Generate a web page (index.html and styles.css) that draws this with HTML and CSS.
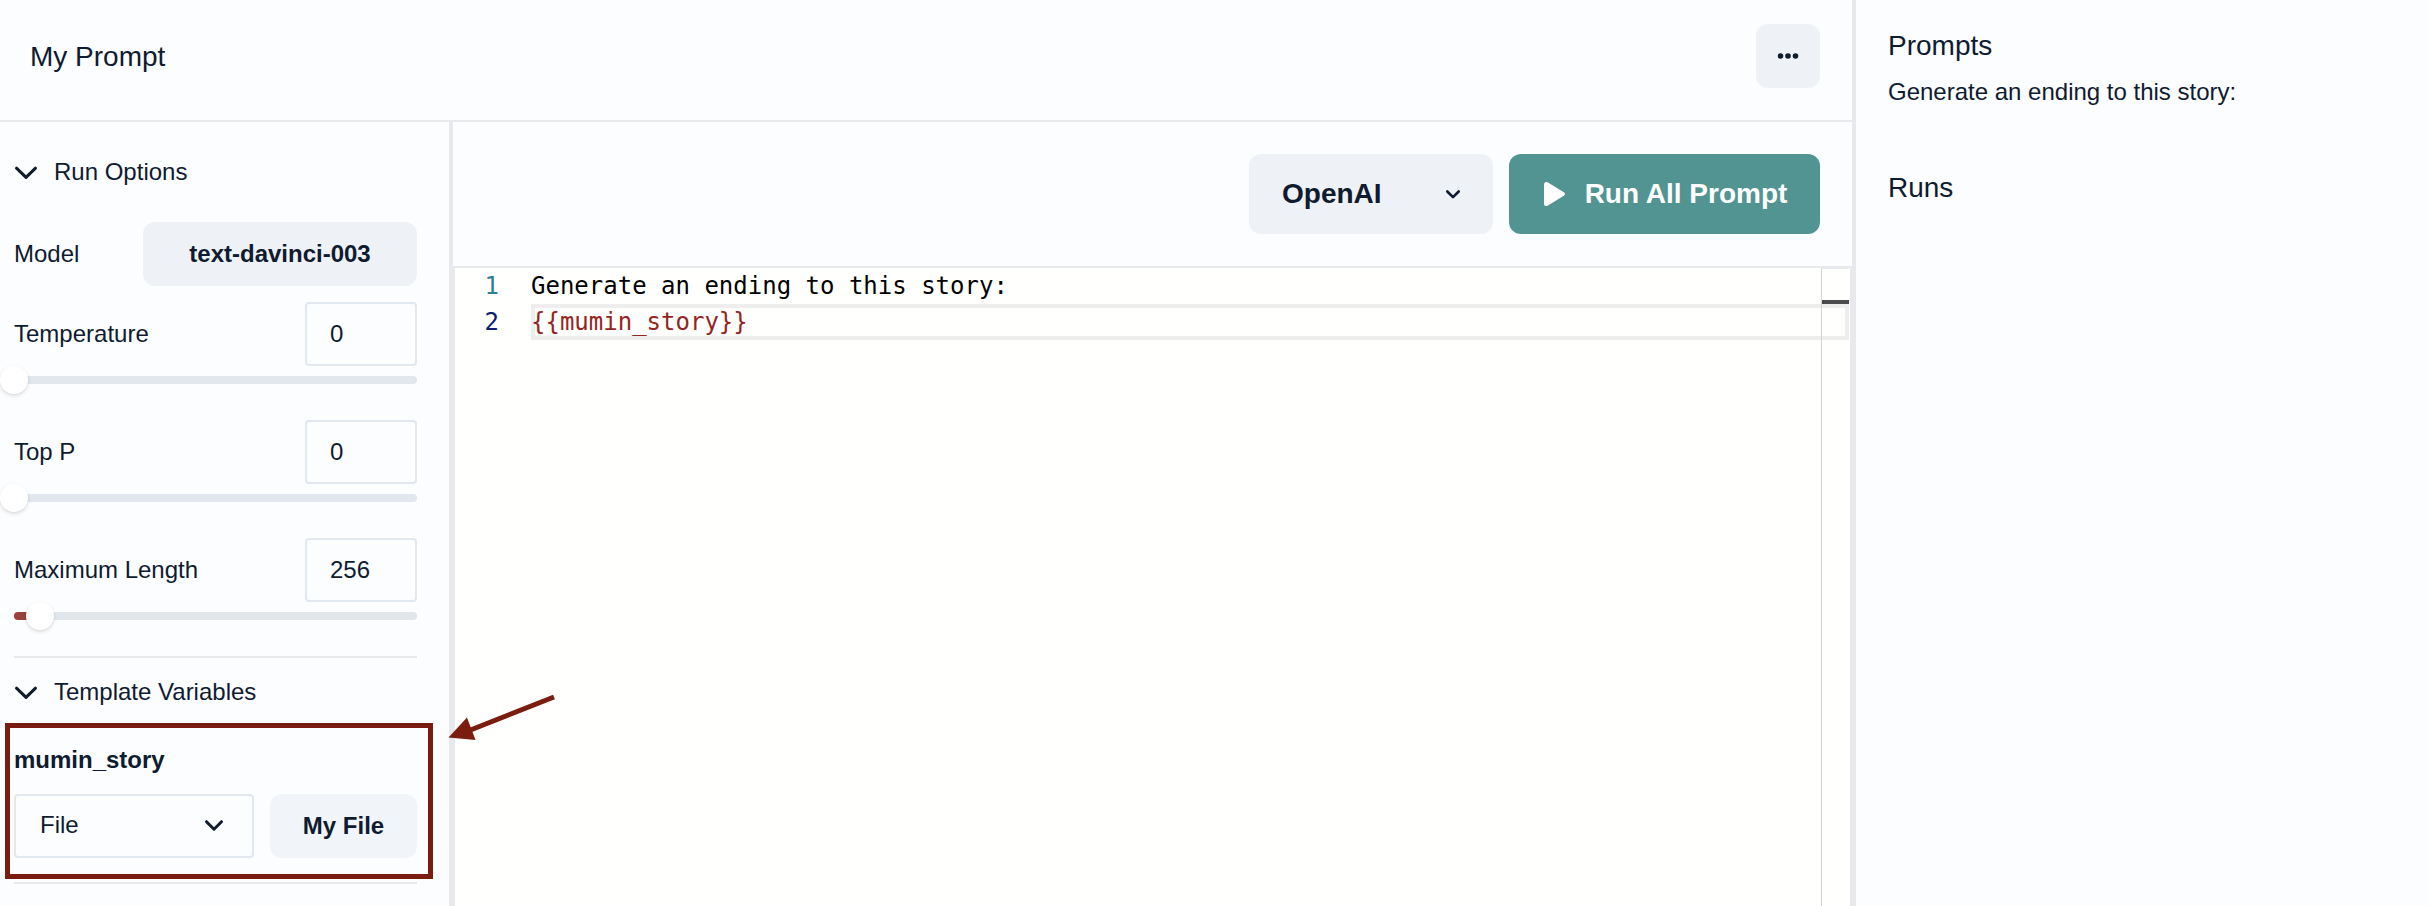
FILE: index.html
```html
<!DOCTYPE html>
<html lang="en">
<head>
<meta charset="utf-8">
<title>My Prompt</title>
<link rel="stylesheet" href="styles.css">
</head>
<body>
<div class="app">
  <main class="workspace">
    <header class="header">
      <h1 class="title">My Prompt</h1>
      <button class="btn menu-btn" aria-label="More">
        <svg width="24" height="24" viewBox="0 0 24 24" fill="currentColor"><circle cx="4.500" cy="12" r="2.800"/><circle cx="12" cy="12" r="2.800"/><circle cx="19.500" cy="12" r="2.800"/></svg>
      </button>
    </header>
    <div class="body">
      <aside class="sidebar">
        <div class="section-head">
          <svg width="24" height="24" viewBox="0 0 24 24" class="stroke"><path d="M2.500 8.200 12 17.400 21.500 8.200"/></svg>
          <span>Run Options</span>
        </div>
        <div class="row model-row">
          <span>Model</span>
          <button class="btn model-btn">text-davinci-003</button>
        </div>
        <div class="field">
          <div class="row"><span>Temperature</span><div class="number">0</div></div>
          <div class="slider"><div class="thumb" style="left:0%"></div></div>
        </div>
        <div class="field">
          <div class="row"><span>Top P</span><div class="number">0</div></div>
          <div class="slider"><div class="thumb" style="left:0%"></div></div>
        </div>
        <div class="field">
          <div class="row"><span>Maximum Length</span><div class="number">256</div></div>
          <div class="slider"><div class="fill" style="width:6.4%"></div><div class="thumb" style="left:6.4%"></div></div>
        </div>
        <div class="divider"></div>
        <div class="section-head variables-head">
          <svg width="24" height="24" viewBox="0 0 24 24" class="stroke"><path d="M2.500 8.200 12 17.400 21.500 8.200"/></svg>
          <span>Template Variables</span>
        </div>
        <div class="variable">
          <div class="variable-name">mumin_story</div>
          <div class="variable-controls">
            <div class="select"><span>File</span>
              <svg width="20" height="20" viewBox="0 0 20 20" class="stroke"><path d="M2.500 6.700 10 14.200 17.500 6.700"/></svg>
            </div>
            <button class="btn file-btn">My File</button>
          </div>
        </div>
        <div class="divider"></div>
      </aside>
      <section class="main">
        <div class="toolbar">
          <button class="btn provider"><span>OpenAI</span>
            <svg width="16" height="16" viewBox="0 0 16 16" class="stroke thin"><path d="M2.300 5.500 8 11.200 13.700 5.500"/></svg>
          </button>
          <button class="btn run">
            <svg width="24" height="26" viewBox="0 0 24 26" fill="currentColor"><path d="M1 3.500C1 1 3.200.3 5 1.600L20.800 11.200C22.400 12.300 22.400 13.700 20.800 14.800L5 24.400C3.200 25.700 1 25 1 22.500Z"/></svg>
            <span>Run All Prompt</span>
          </button>
        </div>
        <div class="editor">
          <div class="line"><span class="num">1</span><span class="code">Generate an ending to this story:</span></div>
          <div class="line"><span class="num active">2</span><span class="code current">{{mumin_story}}</span></div>
          <div class="ruler"><div class="mark"></div></div>
        </div>
      </section>
    </div>
  </main>
  <aside class="results">
    <h2 class="heading">Prompts</h2>
    <p class="prompt">Generate an ending to this story:</p>
    <h2 class="heading runs">Runs</h2>
  </aside>
  <div class="highlight"></div>
  <svg class="arrow" width="120" height="60" viewBox="440 690 120 60"><path d="M554 697 468 731" stroke="#7a1c10" stroke-width="5" fill="none"/><path d="M448.500 737.500 467 717.500 475.500 740Z" fill="#7a1c10"/></svg>
</div>
</body>
</html>
```

FILE: styles.css
```css
* { box-sizing: border-box; }
body {
  margin: 0;
  background: #fcfdff;
  color: #0f1b2f;
  font: 24px/36px "Liberation Sans", Arial, sans-serif;
}
h1, h2, p { margin: 0; font-weight: 400; }
svg { display: block; flex: none; }
.stroke { fill: none; stroke: currentColor; stroke-width: 3; stroke-linecap: round; stroke-linejoin: round; }
.thin { stroke-width: 2.6; }
.app { position: relative; display: flex; width: 2428px; height: 906px; overflow: hidden; }
.workspace { width: 1856px; display: flex; flex-direction: column; border-right: 4px solid #e8e9ed; }
.header {
  height: 122px;
  padding: 24px 32px 32px 30px;
  display: flex;
  justify-content: space-between;
  border-bottom: 2px solid #e8e9ed;
}
.title { font-size: 28px; line-height: 66px; }
.btn {
  display: flex;
  align-items: center;
  justify-content: center;
  padding: 0;
  border: 0;
  border-radius: 12px;
  background: #eef1f6;
  color: inherit;
  font: bold 24px/36px "Liberation Sans", Arial, sans-serif;
}
.menu-btn { width: 64px; height: 64px; }
.body { flex: 1; display: flex; min-height: 0; }
.sidebar { width: 453px; padding: 32px 32px 0 14px; border-right: 4px solid #e8e9ed; }
.section-head { display: flex; align-items: center; gap: 16px; }
.row { display: flex; align-items: center; justify-content: space-between; height: 64px; }
.model-row { margin: 32px 0 16px; }
.model-btn { width: 274px; height: 64px; }
.number { width: 112px; height: 64px; padding: 12px 23px; border: 2px solid #e2e8f0; border-radius: 4px; }
.field { height: 118px; }
.slider { position: relative; height: 8px; margin-top: 10px; border-radius: 4px; background: #e2e7ee; }
.fill { height: 8px; border-radius: 4px 0 0 4px; background: #9c423d; }
.thumb {
  position: absolute;
  top: -10px;
  width: 28px;
  height: 28px;
  margin-left: -14px;
  border-radius: 50%;
  background: #fff;
  box-shadow: 0 2px 4px rgba(0, 0, 0, .11), 0 1px 2px rgba(0, 0, 0, .05);
}
.divider { height: 2px; background: #e8e9ed; }
.variables-head { margin-top: 16px; }
.variable { padding: 32px 0 24px; }
.variable-name { font-weight: 700; }
.variable-controls { display: flex; gap: 16px; margin-top: 16px; }
.select {
  width: 240px;
  height: 64px;
  padding: 0 28px 2px 24px;
  display: flex;
  align-items: center;
  justify-content: space-between;
  border: 2px solid #e2e8f0;
  border-radius: 4px;
}
.file-btn { width: 147px; height: 64px; background: #f1f4f9; }
.main { flex: 1; display: flex; flex-direction: column; }
.toolbar { height: 144px; padding: 32px; display: flex; justify-content: flex-end; gap: 16px; }
.toolbar .btn { height: 80px; font-size: 28px; }
.toolbar .provider { width: 244px; justify-content: space-between; padding: 0 32px 0 33px; }
.toolbar .run { width: 311px; gap: 18px; padding-left: 1px; background: #519492; color: #fff; }
.editor {
  position: relative;
  flex: 1;
  border: solid #e8e9ed;
  border-width: 2px 2px 0;
  background: #fffffe;
  font: 24px/36px "DejaVu Sans Mono", monospace;
  color: #000;
}
.line { display: flex; height: 36px; }
.num { width: 76px; padding-right: 32px; text-align: right; color: #2f7c96; }
.num.active { color: #0b216f; }
.code { flex: 1; margin-right: 1px; white-space: pre; }
.current { line-height: 28px; border: 4px solid #eee; color: #952521; text-indent: -4px; }
.ruler { position: absolute; top: 0; right: 1px; bottom: 0; width: 28px; border-left: 1px solid #d4d4d4; border-top: 1px solid #e8e9ed; }
.mark { height: 4px; margin-top: 31px; background: #4c4c4e; }
.results { flex: 1; padding: 25px 32px; }
.heading { font-size: 28px; line-height: 42px; }
.prompt { margin-top: 7px; }
.runs { margin-top: 57px; }
.highlight { position: absolute; left: 5px; top: 723px; width: 428px; height: 156px; border: 5px solid #7a1c10; }
.arrow { position: absolute; left: 440px; top: 690px; }
```
